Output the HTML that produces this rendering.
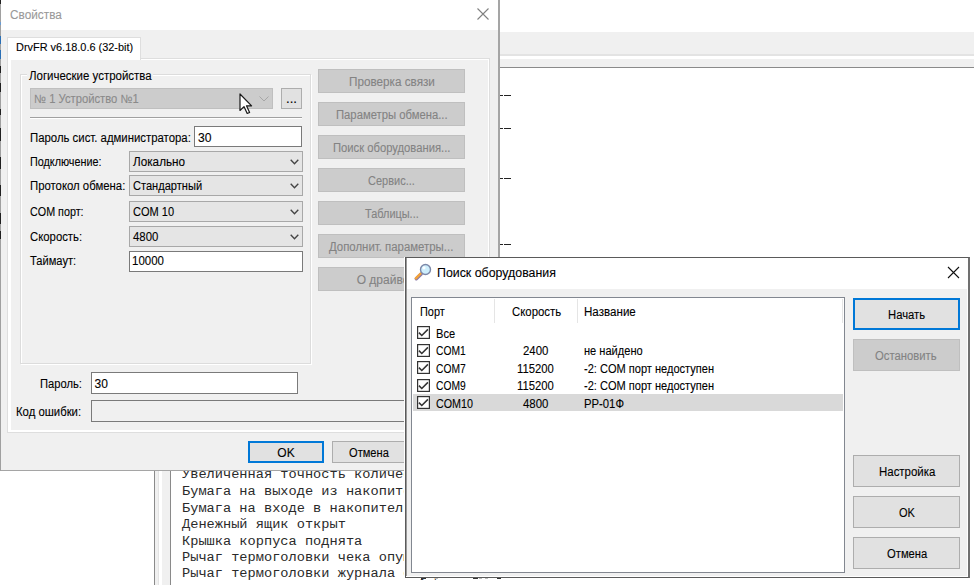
<!DOCTYPE html>
<html><head><meta charset="utf-8"><style>
html,body{margin:0;padding:0;width:974px;height:585px;overflow:hidden;background:#fff}
body>div,body>svg{position:absolute}
.t{white-space:nowrap;-webkit-text-stroke:0.1px currentColor}
</style></head><body>
<div style="left:0px;top:0px;width:974px;height:585px;background:#fff"></div>
<div style="left:154px;top:32px;width:820px;height:22px;background:#f0f0f0"></div>
<div style="left:154px;top:54px;width:820px;height:2px;background:#e3e3e3"></div>
<div style="left:154px;top:59px;width:820px;height:8px;background:#f0f0f0"></div>
<div style="left:154px;top:67px;width:820px;height:1px;background:#8a8a8a"></div>
<div style="left:154px;top:68px;width:1px;height:517px;background:#8a8a8a"></div>
<div style="left:155px;top:68px;width:15px;height:517px;background:#f0f0f0"></div>
<div style="left:158px;top:68px;width:1px;height:517px;background:#e3e3e3"></div>
<div style="left:159px;top:68px;width:3px;height:517px;background:#fff"></div>
<div style="left:170px;top:68px;width:1px;height:517px;background:#8a8a8a"></div>
<div style="left:183px;top:95px;width:328px;height:1px;background:repeating-linear-gradient(90deg,transparent 0 1.5px,#222 1.5px 8.2px)"></div>
<div style="left:183px;top:128px;width:328px;height:1px;background:repeating-linear-gradient(90deg,transparent 0 1.5px,#222 1.5px 8.2px)"></div>
<div style="left:183px;top:178px;width:328px;height:1px;background:repeating-linear-gradient(90deg,transparent 0 1.5px,#222 1.5px 8.2px)"></div>
<div style="left:183px;top:244px;width:328px;height:1px;background:repeating-linear-gradient(90deg,transparent 0 1.5px,#222 1.5px 8.2px)"></div>
<div class="t" style="left:182.00px;top:468.44px;font-size:13.66px;line-height:13.66px;font-family:'Liberation Mono', monospace;color:#2a2a2a;-webkit-text-stroke:0;">Увеличенная точность количества</div>
<div class="t" style="left:182.00px;top:485.04px;font-size:13.66px;line-height:13.66px;font-family:'Liberation Mono', monospace;color:#2a2a2a;-webkit-text-stroke:0;">Бумага на выходе из накопителя</div>
<div class="t" style="left:182.00px;top:501.64px;font-size:13.66px;line-height:13.66px;font-family:'Liberation Mono', monospace;color:#2a2a2a;-webkit-text-stroke:0;">Бумага на входе в накопитель</div>
<div class="t" style="left:182.00px;top:518.04px;font-size:13.66px;line-height:13.66px;font-family:'Liberation Mono', monospace;color:#2a2a2a;-webkit-text-stroke:0;">Денежный ящик открыт</div>
<div class="t" style="left:182.00px;top:534.74px;font-size:13.66px;line-height:13.66px;font-family:'Liberation Mono', monospace;color:#2a2a2a;-webkit-text-stroke:0;">Крышка корпуса поднята</div>
<div class="t" style="left:182.00px;top:551.04px;font-size:13.66px;line-height:13.66px;font-family:'Liberation Mono', monospace;color:#2a2a2a;-webkit-text-stroke:0;">Рычаг термоголовки чека опущен</div>
<div class="t" style="left:182.00px;top:567.44px;font-size:13.66px;line-height:13.66px;font-family:'Liberation Mono', monospace;color:#2a2a2a;-webkit-text-stroke:0;">Рычаг термоголовки журнала опущен</div>
<div style="left:421px;top:578px;width:5px;height:1px;background:#333"></div>
<div style="left:435px;top:578px;width:3px;height:1px;background:#bbb"></div>
<div style="left:473px;top:578px;width:5px;height:1px;background:#333"></div>
<div style="left:479px;top:578px;width:3px;height:1px;background:#bbb"></div>
<div style="left:485px;top:578px;width:3px;height:1px;background:#bbb"></div>
<div style="left:497px;top:578px;width:4px;height:1px;background:#333"></div>
<div style="left:0px;top:0px;width:500px;height:471px;background:#f0f0f0"></div>
<div style="left:0px;top:0px;width:498px;height:30px;background:#fff"></div>
<div style="left:498px;top:0px;width:2px;height:471px;background:#a5a5a5"></div>
<div style="left:0px;top:470px;width:500px;height:1px;background:#a5a5a5"></div>
<div style="left:0px;top:0px;width:1px;height:471px;background:#a0a0a0"></div>
<div style="left:0px;top:0px;width:1px;height:4px;background:#202020"></div>
<div style="left:0px;top:22px;width:1px;height:3px;background:#6a9ad0"></div>
<div style="left:0px;top:36px;width:1px;height:8px;background:#2a6fb5"></div>
<div style="left:0px;top:50px;width:1px;height:9px;background:#2a6fb5"></div>
<div style="left:0px;top:66px;width:1px;height:7px;background:#202020"></div>
<div style="left:0px;top:83px;width:1px;height:9px;background:#202020"></div>
<div style="left:0px;top:109px;width:1px;height:6px;background:#202020"></div>
<div style="left:0px;top:128px;width:1px;height:13px;background:#202020"></div>
<div style="left:0px;top:157px;width:1px;height:12px;background:#202020"></div>
<div style="left:0px;top:185px;width:1px;height:11px;background:#202020"></div>
<div style="left:0px;top:213px;width:1px;height:11px;background:#202020"></div>
<div style="left:0px;top:231px;width:1px;height:8px;background:#202020"></div>
<div class="t" style="left:9.75px;top:9.02px;font-size:12.5px;line-height:12.5px;font-family:'Liberation Sans', sans-serif;color:#999;transform:scaleX(0.9446);transform-origin:0 0;">Свойства</div>
<svg style="left:477px;top:8px" width="12" height="12" viewBox="0 0 12 12"><path d="M0.5 0.5L11.5 11.5M11.5 0.5L0.5 11.5" stroke="#808080" stroke-width="1.1" fill="none"/></svg>
<div style="left:7px;top:58px;width:483px;height:375px;background:#fff;border:1px solid #dedede;box-sizing:border-box"></div>
<div style="left:11px;top:60px;width:477px;height:370px;background:#f0f0f0"></div>
<div style="left:7px;top:37px;width:134px;height:23px;background:#fff;border:1px solid #dedede;border-bottom:none;box-sizing:border-box"></div>
<div class="t" style="left:15.90px;top:41.76px;font-size:11.5px;line-height:11.5px;font-family:'Liberation Sans', sans-serif;color:#000;transform:scaleX(0.9494);transform-origin:0 0;">DrvFR v6.18.0.6 (32-bit)</div>
<div style="left:21px;top:75px;width:291px;height:290px;border:1px solid #fff;box-sizing:border-box"></div>
<div style="left:20px;top:74px;width:291px;height:290px;border:1px solid #dcdcdc;box-sizing:border-box"></div>
<div style="left:27px;top:70px;width:126px;height:10px;background:#f0f0f0"></div>
<div class="t" style="left:28.90px;top:70.34px;font-size:12px;line-height:12px;font-family:'Liberation Sans', sans-serif;color:#000;transform:scaleX(0.9561);transform-origin:0 0;">Логические устройства</div>
<div style="left:30px;top:88px;width:243px;height:21px;background:#cccccc;border:1px solid #bfbfbf;box-sizing:border-box"></div>
<div class="t" style="left:34.30px;top:92.84px;font-size:12px;line-height:12px;font-family:'Liberation Sans', sans-serif;color:#8a8a8a;transform:scaleX(0.9359);transform-origin:0 0;">№ 1 Устройство №1</div>
<svg style="left:259px;top:96px" width="10" height="6" viewBox="0 0 10 6"><path d="M0.5 0.5L5 5L9.5 0.5" stroke="#a6a6a6" stroke-width="1" fill="none"/></svg>
<div style="left:281px;top:88px;width:21px;height:21px;background:#e1e1e1;border:1px solid #adadad;box-sizing:border-box"></div>
<div class="t" style="left:286.00px;top:92.84px;font-size:12px;line-height:12px;font-family:'Liberation Sans', sans-serif;color:#000;transform:scaleX(1.0998);transform-origin:0 0;">...</div>
<div style="left:30px;top:117px;width:272px;height:1px;background:#a0a0a0"></div>
<div style="left:30px;top:118px;width:272px;height:1px;background:#fff"></div>
<div class="t" style="left:30.40px;top:131.64px;font-size:12px;line-height:12px;font-family:'Liberation Sans', sans-serif;color:#000;transform:scaleX(0.9472);transform-origin:0 0;">Пароль сист. администратора:</div>
<div style="left:194px;top:126px;width:108px;height:21px;background:#fff;border:1px solid #7a7a7a;box-sizing:border-box"></div>
<div class="t" style="left:197.50px;top:131.64px;font-size:12px;line-height:12px;font-family:'Liberation Sans', sans-serif;color:#000;transform:scaleX(1.0114);transform-origin:0 0;">30</div>
<div style="left:129px;top:151px;width:174px;height:21px;background:#e5e5e5;border:1px solid #a8a8a8;box-sizing:border-box"></div>
<svg style="left:289.5px;top:159px" width="10" height="6" viewBox="0 0 10 6"><path d="M0.7 0.8L4.5 4.8L8.3 0.8" stroke="#444" stroke-width="1.35" fill="none"/></svg>
<div class="t" style="left:30.40px;top:156.34px;font-size:12px;line-height:12px;font-family:'Liberation Sans', sans-serif;color:#000;transform:scaleX(0.9002);transform-origin:0 0;">Подключение:</div>
<div class="t" style="left:133.10px;top:156.34px;font-size:12px;line-height:12px;font-family:'Liberation Sans', sans-serif;color:#000;transform:scaleX(0.9777);transform-origin:0 0;">Локально</div>
<div style="left:129px;top:175px;width:174px;height:21px;background:#e5e5e5;border:1px solid #a8a8a8;box-sizing:border-box"></div>
<svg style="left:289.5px;top:183px" width="10" height="6" viewBox="0 0 10 6"><path d="M0.7 0.8L4.5 4.8L8.3 0.8" stroke="#444" stroke-width="1.35" fill="none"/></svg>
<div class="t" style="left:30.40px;top:180.34px;font-size:12px;line-height:12px;font-family:'Liberation Sans', sans-serif;color:#000;transform:scaleX(0.9462);transform-origin:0 0;">Протокол обмена:</div>
<div class="t" style="left:133.10px;top:180.34px;font-size:12px;line-height:12px;font-family:'Liberation Sans', sans-serif;color:#000;transform:scaleX(0.9230);transform-origin:0 0;">Стандартный</div>
<div style="left:129px;top:201px;width:174px;height:21px;background:#e5e5e5;border:1px solid #a8a8a8;box-sizing:border-box"></div>
<svg style="left:289.5px;top:209px" width="10" height="6" viewBox="0 0 10 6"><path d="M0.7 0.8L4.5 4.8L8.3 0.8" stroke="#444" stroke-width="1.35" fill="none"/></svg>
<div class="t" style="left:30.40px;top:206.34px;font-size:12px;line-height:12px;font-family:'Liberation Sans', sans-serif;color:#000;transform:scaleX(0.8972);transform-origin:0 0;">COM порт:</div>
<div class="t" style="left:133.10px;top:206.34px;font-size:12px;line-height:12px;font-family:'Liberation Sans', sans-serif;color:#000;transform:scaleX(0.9199);transform-origin:0 0;">COM 10</div>
<div style="left:129px;top:226px;width:174px;height:21px;background:#e5e5e5;border:1px solid #a8a8a8;box-sizing:border-box"></div>
<svg style="left:289.5px;top:234px" width="10" height="6" viewBox="0 0 10 6"><path d="M0.7 0.8L4.5 4.8L8.3 0.8" stroke="#444" stroke-width="1.35" fill="none"/></svg>
<div class="t" style="left:30.40px;top:231.34px;font-size:12px;line-height:12px;font-family:'Liberation Sans', sans-serif;color:#000;transform:scaleX(0.9446);transform-origin:0 0;">Скорость:</div>
<div class="t" style="left:133.10px;top:231.34px;font-size:12px;line-height:12px;font-family:'Liberation Sans', sans-serif;color:#000;transform:scaleX(0.9477);transform-origin:0 0;">4800</div>
<div style="left:129px;top:251px;width:174px;height:21px;background:#fff;border:1px solid #7a7a7a;box-sizing:border-box"></div>
<div class="t" style="left:30.40px;top:254.84px;font-size:12px;line-height:12px;font-family:'Liberation Sans', sans-serif;color:#000;transform:scaleX(0.9280);transform-origin:0 0;">Таймаут:</div>
<div class="t" style="left:131.60px;top:254.84px;font-size:12px;line-height:12px;font-family:'Liberation Sans', sans-serif;color:#000;transform:scaleX(0.9560);transform-origin:0 0;">10000</div>
<div style="left:318px;top:69px;width:147px;height:24px;background:#cccccc;border:1px solid #bfbfbf;box-sizing:border-box"></div>
<div class="t" style="left:349.20px;top:75.64px;font-size:12px;line-height:12px;font-family:'Liberation Sans', sans-serif;color:#838383;transform:scaleX(0.9759);transform-origin:0 0;">Проверка связи</div>
<div style="left:318px;top:102px;width:147px;height:24px;background:#cccccc;border:1px solid #bfbfbf;box-sizing:border-box"></div>
<div class="t" style="left:335.70px;top:108.64px;font-size:12px;line-height:12px;font-family:'Liberation Sans', sans-serif;color:#838383;transform:scaleX(0.9393);transform-origin:0 0;">Параметры обмена...</div>
<div style="left:318px;top:135px;width:147px;height:24px;background:#cccccc;border:1px solid #bfbfbf;box-sizing:border-box"></div>
<div class="t" style="left:332.80px;top:141.64px;font-size:12px;line-height:12px;font-family:'Liberation Sans', sans-serif;color:#838383;transform:scaleX(0.9364);transform-origin:0 0;">Поиск оборудования...</div>
<div style="left:318px;top:168px;width:147px;height:24px;background:#cccccc;border:1px solid #bfbfbf;box-sizing:border-box"></div>
<div class="t" style="left:367.60px;top:174.64px;font-size:12px;line-height:12px;font-family:'Liberation Sans', sans-serif;color:#838383;transform:scaleX(0.9160);transform-origin:0 0;">Сервис...</div>
<div style="left:318px;top:201px;width:147px;height:24px;background:#cccccc;border:1px solid #bfbfbf;box-sizing:border-box"></div>
<div class="t" style="left:364.50px;top:207.64px;font-size:12px;line-height:12px;font-family:'Liberation Sans', sans-serif;color:#838383;transform:scaleX(0.9101);transform-origin:0 0;">Таблицы...</div>
<div style="left:318px;top:234px;width:147px;height:24px;background:#cccccc;border:1px solid #bfbfbf;box-sizing:border-box"></div>
<div class="t" style="left:329.20px;top:240.64px;font-size:12px;line-height:12px;font-family:'Liberation Sans', sans-serif;color:#838383;transform:scaleX(0.9499);transform-origin:0 0;">Дополнит. параметры...</div>
<div style="left:318px;top:267px;width:147px;height:24px;background:#cccccc;border:1px solid #bfbfbf;box-sizing:border-box"></div>
<div class="t" style="left:356.70px;top:273.64px;font-size:12px;line-height:12px;font-family:'Liberation Sans', sans-serif;color:#838383;">О драйвере</div>
<div class="t" style="left:39.50px;top:378.14px;font-size:12px;line-height:12px;font-family:'Liberation Sans', sans-serif;color:#000;transform:scaleX(0.9317);transform-origin:0 0;">Пароль:</div>
<div style="left:91px;top:372px;width:207px;height:22px;background:#fff;border:1px solid #7a7a7a;box-sizing:border-box"></div>
<div class="t" style="left:94.60px;top:378.14px;font-size:12px;line-height:12px;font-family:'Liberation Sans', sans-serif;color:#000;">30</div>
<div class="t" style="left:16.30px;top:405.64px;font-size:12px;line-height:12px;font-family:'Liberation Sans', sans-serif;color:#000;transform:scaleX(0.9448);transform-origin:0 0;">Код ошибки:</div>
<div style="left:91px;top:400px;width:400px;height:22px;background:#f0f0f0;border:1px solid #7a7a7a;box-sizing:border-box"></div>
<div style="left:248px;top:441px;width:76px;height:22px;background:#e1e1e1;border:2px solid #0078d7;box-sizing:border-box"></div>
<div class="t" style="left:277.33px;top:446.84px;font-size:12px;line-height:12px;font-family:'Liberation Sans', sans-serif;color:#000;">OK</div>
<div style="left:332px;top:441px;width:76px;height:22px;background:#e1e1e1;border:1px solid #adadad;box-sizing:border-box"></div>
<div class="t" style="left:349.00px;top:446.84px;font-size:12px;line-height:12px;font-family:'Liberation Sans', sans-serif;color:#000;transform:scaleX(0.9244);transform-origin:0 0;">Отмена</div>
<svg style="left:239px;top:93px" width="14" height="22" viewBox="0 0 14 22"><path d="M1 1L1 17.5L5 13.6L8.2 20.5L10.6 19.5L7.5 12.8L12.6 12.8Z" fill="#fff" stroke="#1a1a1a" stroke-width="1.2" stroke-linejoin="round"/></svg>
<div style="left:404px;top:257px;width:1px;height:321px;background:#fff"></div>
<div style="left:405px;top:257px;width:565px;height:321px;background:#f0f0f0;border:1px solid #5a5a5a;border-right:2px solid #707070;box-sizing:border-box"></div>
<div style="left:406px;top:258px;width:1px;height:319px;background:#9a9a9a"></div>
<div style="left:967px;top:258px;width:1px;height:319px;background:#fff"></div>
<div style="left:406px;top:576px;width:562px;height:1px;background:#fff"></div>
<div style="left:407px;top:258px;width:560px;height:31px;background:#fff"></div>
<svg style="left:410px;top:260px" width="26" height="26" viewBox="0 0 26 26">
<line x1="6.3" y1="18.8" x2="11.2" y2="14" stroke="#8a7aa8" stroke-width="3.4" stroke-linecap="round"/>
<line x1="5.8" y1="18.3" x2="10.6" y2="13.6" stroke="#f2a23a" stroke-width="2.4" stroke-linecap="round"/>
<circle cx="15.5" cy="9.5" r="5" fill="#cdeefc" stroke="#7c88a8" stroke-width="1.4"/>
<circle cx="14" cy="7.8" r="1.6" fill="#fff" opacity="0.9"/>
</svg>
<div class="t" style="left:437.30px;top:266.82px;font-size:12.5px;line-height:12.5px;font-family:'Liberation Sans', sans-serif;color:#000;transform:scaleX(0.9894);transform-origin:0 0;">Поиск оборудования</div>
<svg style="left:947px;top:266px" width="13" height="13" viewBox="0 0 13 13"><path d="M1 1L12 12M12 1L1 12" stroke="#111" stroke-width="1.1" fill="none"/></svg>
<div style="left:411px;top:297px;width:434px;height:276px;background:#fff;border:1px solid #828790;box-sizing:border-box"></div>
<div style="left:494px;top:299px;width:1px;height:24px;background:#e5e5e5"></div>
<div style="left:577px;top:299px;width:1px;height:24px;background:#e5e5e5"></div>
<div style="left:842px;top:299px;width:1px;height:24px;background:#e5e5e5"></div>
<div class="t" style="left:419.70px;top:305.84px;font-size:12px;line-height:12px;font-family:'Liberation Sans', sans-serif;color:#000;transform:scaleX(0.9079);transform-origin:0 0;">Порт</div>
<div class="t" style="left:512.20px;top:305.84px;font-size:12px;line-height:12px;font-family:'Liberation Sans', sans-serif;color:#000;transform:scaleX(0.9475);transform-origin:0 0;">Скорость</div>
<div class="t" style="left:584.30px;top:305.84px;font-size:12px;line-height:12px;font-family:'Liberation Sans', sans-serif;color:#000;transform:scaleX(0.9660);transform-origin:0 0;">Название</div>
<div style="left:413px;top:394px;width:430px;height:17px;background:#d9d9d9"></div>
<svg style="left:417px;top:326.0px" width="13" height="13" viewBox="0 0 13 13"><rect x="0.6" y="0.6" width="11.8" height="11.8" fill="#fff" stroke="#333" stroke-width="1.2"/><path d="M1.9 6.6L4.8 9.5L10.9 3.4" stroke="#333" stroke-width="1.55" fill="none"/></svg>
<div class="t" style="left:435.90px;top:327.74px;font-size:12px;line-height:12px;font-family:'Liberation Sans', sans-serif;color:#000;transform:scaleX(0.9237);transform-origin:0 0;">Все</div>
<svg style="left:417px;top:343.5px" width="13" height="13" viewBox="0 0 13 13"><rect x="0.6" y="0.6" width="11.8" height="11.8" fill="#fff" stroke="#333" stroke-width="1.2"/><path d="M1.9 6.6L4.8 9.5L10.9 3.4" stroke="#333" stroke-width="1.55" fill="none"/></svg>
<div class="t" style="left:435.90px;top:345.19px;font-size:12px;line-height:12px;font-family:'Liberation Sans', sans-serif;color:#000;transform:scaleX(0.8567);transform-origin:0 0;">COM1</div>
<div class="t" style="left:523.00px;top:345.19px;font-size:12px;line-height:12px;font-family:'Liberation Sans', sans-serif;color:#000;transform:scaleX(0.9515);transform-origin:0 0;">2400</div>
<div class="t" style="left:584.30px;top:345.19px;font-size:12px;line-height:12px;font-family:'Liberation Sans', sans-serif;color:#000;transform:scaleX(0.9227);transform-origin:0 0;">не найдено</div>
<svg style="left:417px;top:361.0px" width="13" height="13" viewBox="0 0 13 13"><rect x="0.6" y="0.6" width="11.8" height="11.8" fill="#fff" stroke="#333" stroke-width="1.2"/><path d="M1.9 6.6L4.8 9.5L10.9 3.4" stroke="#333" stroke-width="1.55" fill="none"/></svg>
<div class="t" style="left:435.90px;top:362.64px;font-size:12px;line-height:12px;font-family:'Liberation Sans', sans-serif;color:#000;transform:scaleX(0.8567);transform-origin:0 0;">COM7</div>
<div class="t" style="left:517.40px;top:362.64px;font-size:12px;line-height:12px;font-family:'Liberation Sans', sans-serif;color:#000;transform:scaleX(0.9399);transform-origin:0 0;">115200</div>
<div class="t" style="left:584.30px;top:362.64px;font-size:12px;line-height:12px;font-family:'Liberation Sans', sans-serif;color:#000;transform:scaleX(0.9205);transform-origin:0 0;">-2: COM порт недоступен</div>
<svg style="left:417px;top:378.5px" width="13" height="13" viewBox="0 0 13 13"><rect x="0.6" y="0.6" width="11.8" height="11.8" fill="#fff" stroke="#333" stroke-width="1.2"/><path d="M1.9 6.6L4.8 9.5L10.9 3.4" stroke="#333" stroke-width="1.55" fill="none"/></svg>
<div class="t" style="left:435.90px;top:380.09px;font-size:12px;line-height:12px;font-family:'Liberation Sans', sans-serif;color:#000;transform:scaleX(0.8567);transform-origin:0 0;">COM9</div>
<div class="t" style="left:517.40px;top:380.09px;font-size:12px;line-height:12px;font-family:'Liberation Sans', sans-serif;color:#000;transform:scaleX(0.9399);transform-origin:0 0;">115200</div>
<div class="t" style="left:584.30px;top:380.09px;font-size:12px;line-height:12px;font-family:'Liberation Sans', sans-serif;color:#000;transform:scaleX(0.9205);transform-origin:0 0;">-2: COM порт недоступен</div>
<svg style="left:417px;top:396.0px" width="13" height="13" viewBox="0 0 13 13"><rect x="0.6" y="0.6" width="11.8" height="11.8" fill="#fff" stroke="#333" stroke-width="1.2"/><path d="M1.9 6.6L4.8 9.5L10.9 3.4" stroke="#333" stroke-width="1.55" fill="none"/></svg>
<div class="t" style="left:435.90px;top:397.54px;font-size:12px;line-height:12px;font-family:'Liberation Sans', sans-serif;color:#000;transform:scaleX(0.8949);transform-origin:0 0;">COM10</div>
<div class="t" style="left:523.00px;top:397.54px;font-size:12px;line-height:12px;font-family:'Liberation Sans', sans-serif;color:#000;transform:scaleX(0.9515);transform-origin:0 0;">4800</div>
<div class="t" style="left:584.30px;top:397.54px;font-size:12px;line-height:12px;font-family:'Liberation Sans', sans-serif;color:#000;transform:scaleX(0.9417);transform-origin:0 0;">РР-01Ф</div>
<div style="left:853px;top:298px;width:107px;height:32px;background:#e1e1e1;border:2px solid #0078d7;box-sizing:border-box"></div>
<div class="t" style="left:887.50px;top:308.84px;font-size:12px;line-height:12px;font-family:'Liberation Sans', sans-serif;color:#000;transform:scaleX(0.9396);transform-origin:0 0;">Начать</div>
<div style="left:853px;top:339px;width:107px;height:32px;background:#cccccc;border:1px solid #bfbfbf;box-sizing:border-box"></div>
<div class="t" style="left:875.30px;top:350.34px;font-size:12px;line-height:12px;font-family:'Liberation Sans', sans-serif;color:#838383;transform:scaleX(0.9390);transform-origin:0 0;">Остановить</div>
<div style="left:853px;top:455px;width:107px;height:32px;background:#e1e1e1;border:1px solid #adadad;box-sizing:border-box"></div>
<div class="t" style="left:878.60px;top:465.94px;font-size:12px;line-height:12px;font-family:'Liberation Sans', sans-serif;color:#000;transform:scaleX(0.9547);transform-origin:0 0;">Настройка</div>
<div style="left:853px;top:496px;width:107px;height:32px;background:#e1e1e1;border:1px solid #adadad;box-sizing:border-box"></div>
<div class="t" style="left:898.50px;top:507.04px;font-size:12px;line-height:12px;font-family:'Liberation Sans', sans-serif;color:#000;transform:scaleX(0.9171);transform-origin:0 0;">OK</div>
<div style="left:853px;top:537px;width:107px;height:32px;background:#e1e1e1;border:1px solid #adadad;box-sizing:border-box"></div>
<div class="t" style="left:886.80px;top:548.14px;font-size:12px;line-height:12px;font-family:'Liberation Sans', sans-serif;color:#000;transform:scaleX(0.9360);transform-origin:0 0;">Отмена</div>
</body></html>
